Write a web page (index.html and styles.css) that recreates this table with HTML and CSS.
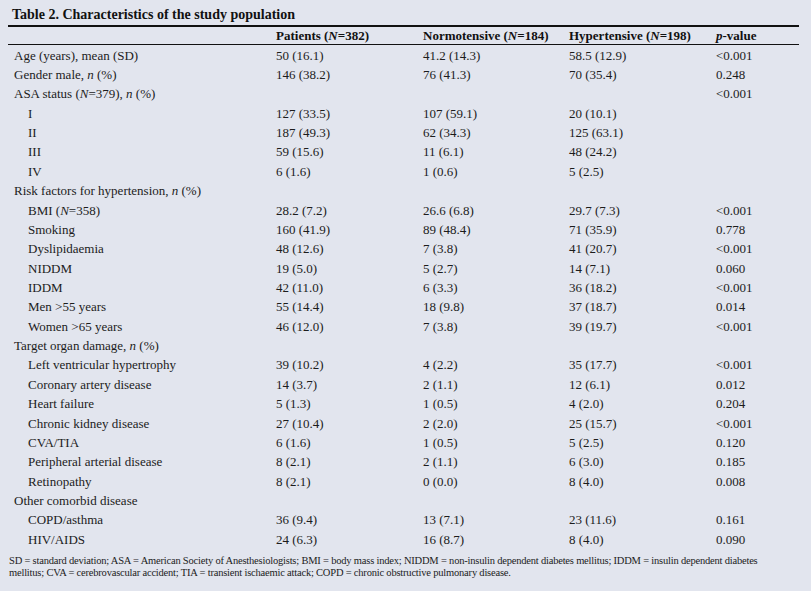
FILE: index.html
```html
<!DOCTYPE html>
<html>
<head>
<meta charset="utf-8">
<link rel="stylesheet" href="styles.css">
</head>
<body>
<div class="page">
  <div class="title">Table 2. Characteristics of the study population</div>
  <div class="tbl">
    <div class="row head">
      <div></div>
      <div>Patients (<i>N</i>=382)</div>
      <div>Normotensive (<i>N</i>=184)</div>
      <div>Hypertensive (<i>N</i>=198)</div>
      <div><i>p</i>-value</div>
    </div>
    <div class="body">
      <div class="row"><div>Age (years), mean (SD)</div><div>50 (16.1)</div><div>41.2 (14.3)</div><div>58.5 (12.9)</div><div>&lt;0.001</div></div>
      <div class="row"><div>Gender male, <i>n</i> (%)</div><div>146 (38.2)</div><div>76 (41.3)</div><div>70 (35.4)</div><div>0.248</div></div>
      <div class="row"><div>ASA status (<i>N</i>=379), <i>n</i> (%)</div><div></div><div></div><div></div><div>&lt;0.001</div></div>
      <div class="row sub"><div>I</div><div>127 (33.5)</div><div>107 (59.1)</div><div>20 (10.1)</div><div></div></div>
      <div class="row sub"><div>II</div><div>187 (49.3)</div><div>62 (34.3)</div><div>125 (63.1)</div><div></div></div>
      <div class="row sub"><div>III</div><div>59 (15.6)</div><div>11 (6.1)</div><div>48 (24.2)</div><div></div></div>
      <div class="row sub"><div>IV</div><div>6 (1.6)</div><div>1 (0.6)</div><div>5 (2.5)</div><div></div></div>
      <div class="row"><div>Risk factors for hypertension, <i>n</i> (%)</div><div></div><div></div><div></div><div></div></div>
      <div class="row sub"><div>BMI (<i>N</i>=358)</div><div>28.2 (7.2)</div><div>26.6 (6.8)</div><div>29.7 (7.3)</div><div>&lt;0.001</div></div>
      <div class="row sub"><div>Smoking</div><div>160 (41.9)</div><div>89 (48.4)</div><div>71 (35.9)</div><div>0.778</div></div>
      <div class="row sub"><div>Dyslipidaemia</div><div>48 (12.6)</div><div>7 (3.8)</div><div>41 (20.7)</div><div>&lt;0.001</div></div>
      <div class="row sub"><div>NIDDM</div><div>19 (5.0)</div><div>5 (2.7)</div><div>14 (7.1)</div><div>0.060</div></div>
      <div class="row sub"><div>IDDM</div><div>42 (11.0)</div><div>6 (3.3)</div><div>36 (18.2)</div><div>&lt;0.001</div></div>
      <div class="row sub"><div>Men &gt;55 years</div><div>55 (14.4)</div><div>18 (9.8)</div><div>37 (18.7)</div><div>0.014</div></div>
      <div class="row sub"><div>Women &gt;65 years</div><div>46 (12.0)</div><div>7 (3.8)</div><div>39 (19.7)</div><div>&lt;0.001</div></div>
      <div class="row"><div>Target organ damage, <i>n</i> (%)</div><div></div><div></div><div></div><div></div></div>
      <div class="row sub"><div>Left ventricular hypertrophy</div><div>39 (10.2)</div><div>4 (2.2)</div><div>35 (17.7)</div><div>&lt;0.001</div></div>
      <div class="row sub"><div>Coronary artery disease</div><div>14 (3.7)</div><div>2 (1.1)</div><div>12 (6.1)</div><div>0.012</div></div>
      <div class="row sub"><div>Heart failure</div><div>5 (1.3)</div><div>1 (0.5)</div><div>4 (2.0)</div><div>0.204</div></div>
      <div class="row sub"><div>Chronic kidney disease</div><div>27 (10.4)</div><div>2 (2.0)</div><div>25 (15.7)</div><div>&lt;0.001</div></div>
      <div class="row sub"><div>CVA/TIA</div><div>6 (1.6)</div><div>1 (0.5)</div><div>5 (2.5)</div><div>0.120</div></div>
      <div class="row sub"><div>Peripheral arterial disease</div><div>8 (2.1)</div><div>2 (1.1)</div><div>6 (3.0)</div><div>0.185</div></div>
      <div class="row sub"><div>Retinopathy</div><div>8 (2.1)</div><div>0 (0.0)</div><div>8 (4.0)</div><div>0.008</div></div>
      <div class="row"><div>Other comorbid disease</div><div></div><div></div><div></div><div></div></div>
      <div class="row sub"><div>COPD/asthma</div><div>36 (9.4)</div><div>13 (7.1)</div><div>23 (11.6)</div><div>0.161</div></div>
      <div class="row sub"><div>HIV/AIDS</div><div>24 (6.3)</div><div>16 (8.7)</div><div>8 (4.0)</div><div>0.090</div></div>
    </div>
  </div>
  <p class="note">SD = standard deviation; ASA = American Society of Anesthesiologists; BMI = body mass index; NIDDM = non-insulin dependent diabetes mellitus; IDDM = insulin dependent diabetes<br>mellitus; CVA = cerebrovascular accident; TIA = transient ischaemic attack; COPD = chronic obstructive pulmonary disease.</p>
</div>
</body>
</html>
```
FILE: styles.css
```css
html, body {
  margin: 0;
  padding: 0;
  background: #e2e5ee;
}
.page {
  width: 791px;
  padding: 5px 0 0 8px;
  font-family: "Liberation Serif", serif;
  color: #1c1c1c;
}
.title {
  font-weight: bold;
  font-size: 14px;
  color: #111;
  padding-left: 4px;
  height: 20px;
  line-height: 19px;
}
.tbl {
  border-top: 2px solid #111;
}
.row {
  display: grid;
  grid-template-columns: 262px 147px 146px 147px 1fr;
  height: 19.36px;
  align-items: center;
  font-size: 13px;
  padding-left: 6px;
  white-space: nowrap;
}
.row.head {
  height: 17px;
  font-weight: bold;
  color: #111;
  border-bottom: 1px solid #111;
}
.body {
  padding-top: 1px;
}
.row.sub > div:first-child {
  padding-left: 14px;
}
.note {
  margin: 6px 0 0 1px;
  font-size: 10.5px;
  letter-spacing: -0.2px;
  line-height: 11.5px;
  color: #1c1c1c;
  white-space: nowrap;
}
```
